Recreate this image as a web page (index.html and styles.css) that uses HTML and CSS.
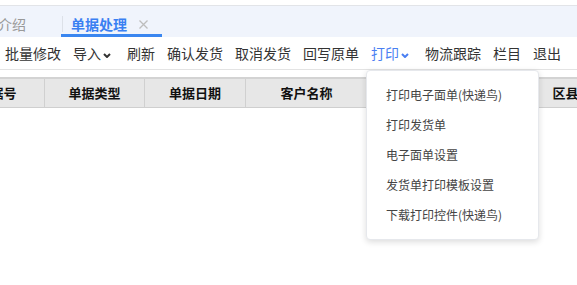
FILE: index.html
```html
<!DOCTYPE html>
<html lang="zh-CN">
<head>
  <meta charset="UTF-8">
  <title>单据处理</title>
  <link rel="stylesheet" href="styles.css">
</head>
<body>

<div class="page">
  <div class="tabs">
    <div class="tab">介绍<span class="tab-close hidden"></span></div>
    <div class="tab active">单据处理<svg class="tab-close" width="9" height="9" viewBox="0 0 9 9"><path d="M0.5 0.5 L8.5 8.5 M8.5 0.5 L0.5 8.5" stroke="#bdbdbd" stroke-width="1.3"/></svg></div>
  </div>

  <div class="toolbar">
    <span class="tool">批量修改</span>
    <span class="tool">导入<svg class="chevron" width="8" height="5" viewBox="0 0 8 5"><path d="M1 1 L4 4 L7 1" fill="none" stroke="currentColor" stroke-width="2"/></svg></span>
    <span class="tool">刷新</span>
    <span class="tool">确认发货</span>
    <span class="tool">取消发货</span>
    <span class="tool">回写原单</span>
    <span class="tool open">打印<svg class="chevron" width="8" height="5" viewBox="0 0 8 5"><path d="M1 1 L4 4 L7 1" fill="none" stroke="currentColor" stroke-width="2"/></svg>
      <div class="dropdown">
        <div class="dropdown-item">打印电子面单(快递鸟)</div>
        <div class="dropdown-item">打印发货单</div>
        <div class="dropdown-item">电子面单设置</div>
        <div class="dropdown-item">发货单打印模板设置</div>
        <div class="dropdown-item">下载打印控件(快递鸟)</div>
      </div>
    </span>
    <span class="tool">物流跟踪</span>
    <span class="tool">栏目</span>
    <span class="tool">退出</span>
  </div>

  <div class="grid">
    <div class="grid-head">
      <div class="col col-no">单据号</div>
      <div class="col col-type">单据类型</div>
      <div class="col col-date">单据日期</div>
      <div class="col col-customer">客户名称</div>
      <div class="col col-phone"></div>
      <div class="col col-area">区县</div>
    </div>
  </div>
</div>

</body>
</html>
```

FILE: styles.css
```css
html, body {
  margin: 0;
  height: 100%;
}

body {
  font-family: "Noto Sans CJK SC", "Liberation Sans", sans-serif;
  font-size: 14px;
  color: #333;
}

.page {
  position: relative;
  min-height: 100%;
}

.tabs {
  display: flex;
  margin-top: 5px;
  height: 31px;
  border-top: 1px solid #e2e4e8;
  background-color: #f0f4fc;
  overflow: hidden;
}

.tab {
  position: relative;
  display: flex;
  align-items: center;
  height: 20px;
  padding: 8px 14px 0 10px;
  line-height: 20px;
  color: #999;
  border-bottom: 3px solid transparent;
}

.tab:first-child {
  margin-left: -12px;
}

.tab + .tab::before {
  content: "";
  position: absolute;
  left: 1px;
  top: 10px;
  height: 16px;
  border-left: 1px solid #dde1e8;
}

.tab.active {
  color: #3a80f2;
  font-weight: bold;
  border-bottom-color: #3a86f0;
}

.tab-close {
  flex: none;
  margin-left: 12px;
  width: 9px;
  height: 9px;
}

.tab-close.hidden {
  visibility: hidden;
}

.toolbar {
  position: relative;
  z-index: 5;
  display: flex;
  height: 32px;
  padding-left: 5px;
  line-height: 32px;
  border-bottom: 1px solid #e3e3e3;
}

.tool {
  position: relative;
  margin-right: 12px;
  white-space: nowrap;
  cursor: pointer;
}

.chevron {
  margin: 0 4px 0 2px;
  vertical-align: 1px;
}

.tool.open {
  color: #4a7ff2;
}

.dropdown {
  position: absolute;
  top: 33px;
  left: -5px;
  z-index: 10;
  width: 171px;
  padding: 9px 0;
  line-height: 30px;
  background: #fff;
  border: 1px solid #e6e8ec;
  border-radius: 4px;
  box-shadow: 0 2px 6px rgba(0, 0, 0, 0.14);
  color: #444;
  font-size: 12px;
}

.dropdown-item {
  padding-left: 19px;
}

.grid {
  margin-top: 7px;
  overflow: hidden;
}

.grid-head {
  display: flex;
  margin-left: -50px;
  height: 28px;
  line-height: 28px;
  background-color: #e7e7e7;
  border-top: 2px solid #d3d3d3;
  border-bottom: 1px solid #cfcfcf;
  font-size: 13px;
  font-weight: bold;
  color: #111;
}

.col {
  flex: none;
  text-align: center;
  border-right: 1px solid #d0d0d0;
  box-sizing: border-box;
  white-space: nowrap;
}

.col-no { width: 95px; }
.col-type { width: 100px; }
.col-date { width: 101px; }
.col-customer { width: 122px; }
.col-phone { width: 148px; }
.col-area { width: 100px; }
```
